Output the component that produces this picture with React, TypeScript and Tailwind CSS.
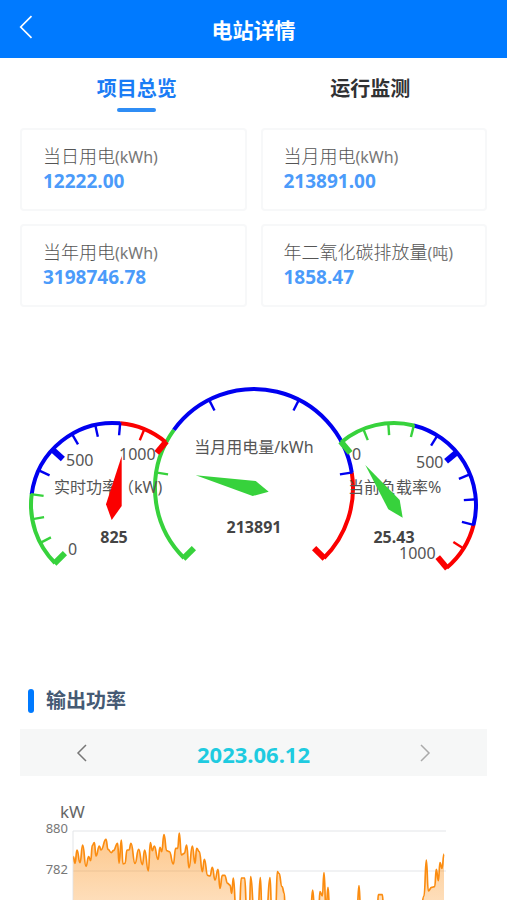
import { useState } from 'react';

type Band = { from: number; to: number; color: string };

interface GaugeProps {
  cx: number;
  cy: number;
  r: number;
  start: number;
  end: number;
  splits: number;
  major: number[];
}

const GREEN = '#37d23c';
const BLUE = '#0000f0';
const RED = '#fb0000';

const bands: Band[] = [
  { from: 0, to: 0.3, color: GREEN },
  { from: 0.3, to: 0.8, color: BLUE },
  { from: 0.8, to: 1, color: RED },
];

const stats = [
  { label: '当日用电', unit: '(kWh)', value: '12222.00' },
  { label: '当月用电', unit: '(kWh)', value: '213891.00' },
  { label: '当年用电', unit: '(kWh)', value: '3198746.78' },
  { label: '年二氧化碳排放量', unit: '(吨)', value: '1858.47' },
];

const tabs = ['项目总览', '运行监测'];

// output power samples, in thirds of a chart unit
const power: [number, number][] = [
  [130, 200], [135, 220], [141, 180], [150, 218], [158, 165], [168, 229], [176, 200], [182, 212],
  [187, 166], [193, 158], [198, 198], [208, 168], [213, 180], [228, 148], [234, 178], [244, 188],
  [250, 182], [263, 160], [267, 220], [274, 150], [279, 222], [285, 220], [291, 180], [297, 180],
  [303, 160], [315, 220], [326, 178], [337, 224], [344, 180], [355, 243], [361, 158], [367, 182],
  [373, 168], [384, 208], [390, 172], [395, 185], [402, 134], [410, 182], [418, 185], [430, 222],
  [437, 175], [443, 175], [448, 129], [454, 195], [463, 190], [470, 165], [477, 234], [487, 168],
  [495, 220], [500, 175], [508, 185], [517, 245], [523, 208], [533, 256], [540, 258], [547, 232],
  [555, 270], [564, 238], [570, 295], [577, 256], [584, 256], [593, 280], [600, 285], [605, 310],
  [610, 264], [618, 360], [628, 360], [634, 264], [644, 264], [650, 360], [658, 360], [662, 260],
  [672, 360], [684, 360], [691, 263], [696, 360], [710, 360], [720, 263], [725, 360], [737, 360],
  [742, 245], [747, 250], [756, 290], [763, 310], [765, 360], [842, 360], [848, 300], [854, 360],
  [866, 360], [870, 305], [877, 318], [882, 248], [888, 360], [894, 292], [899, 360], [981, 360],
  [987, 287], [992, 360], [1042, 360], [1045, 314], [1057, 314], [1061, 360], [1172, 360],
  [1182, 318], [1189, 210], [1195, 303], [1205, 292], [1214, 290], [1219, 238], [1225, 272],
  [1230, 218], [1236, 235], [1242, 192],
];

function smooth(points: [number, number][]) {
  return points.reduce((d, [x, y], i) => {
    if (i === 0) return `M${x} ${y}`;
    const [px, py] = points[i - 1];
    const mid = (px + x) / 2;
    return `${d} C${mid} ${py} ${mid} ${y} ${x} ${y}`;
  }, '');
}

function polar(cx: number, cy: number, r: number, deg: number) {
  const a = (deg * Math.PI) / 180;
  return [cx + r * Math.cos(a), cy - r * Math.sin(a)];
}

function Gauge({ cx, cy, r, start, end, splits, major }: GaugeProps) {
  const angle = (t: number) => start + (end - start) * t;
  const ticks = Array.from({ length: splits + 1 }, (_, i) => i);

  return (
    <g fill="none">
      {bands.map((b) => {
        const [x1, y1] = polar(cx, cy, r, angle(b.from));
        const [x2, y2] = polar(cx, cy, r, angle(b.to));
        return (
          <path key={b.from} d={`M${x1} ${y1}A${r} ${r} 0 0 1 ${x2} ${y2}`} stroke={b.color} strokeWidth={4} />
        );
      })}
      {ticks.map((i) => {
        const t = i / splits;
        const band = bands.find((b) => t <= b.to + 0.001) ?? bands[2];
        const big = major.includes(i);
        const [x1, y1] = polar(cx, cy, r + 1, angle(t));
        const [x2, y2] = polar(cx, cy, r - (big ? 14 : 12), angle(t));
        return (
          <line key={i} x1={x1} y1={y1} x2={x2} y2={y2} stroke={band.color} strokeWidth={big ? 6 : 2.4} />
        );
      })}
    </g>
  );
}

function Gauges() {
  return (
    <svg viewBox="0 0 507 220" className="block w-full" role="img" aria-label="实时功率、当月用电量、当前负载率">
      <Gauge cx={254} cy={127} r={99} start={225} end={-45} splits={5} major={[0, 5]} />
      <Gauge cx={113} cy={144} r={82} start={225} end={50} splits={10} major={[0, 5, 10]} />
      <Gauge cx={394} cy={144} r={82} start={130} end={-50} splits={10} major={[0, 5, 10]} />
      <g fontSize={16} fill="#555">
        <text x={68} y={194}>0</text>
        <text x={66} y={105}>500</text>
        <text x={119} y={99}>1000</text>
        <text x={54} y={132}>实时功率（kW)</text>
        <text x={254} y={92} textAnchor="middle">当月用电量/kWh</text>
        <text x={352} y={99}>0</text>
        <text x={416} y={107}>500</text>
        <text x={399} y={198}>1000</text>
        <text x={348} y={132}>当前负载率%</text>
      </g>
      <polygon points="121.7,95 106,143.3 111.7,159 121.7,145" fill={RED} />
      <polygon points="195.7,114.3 255.7,120 268.7,130.7 252.7,135" fill={GREEN} />
      <polygon points="365.3,104 399.7,139 402.7,156.7 388.3,148.3" fill={GREEN} />
      <g fontSize={16} fontWeight={700} fill="#444" textAnchor="middle">
        <text x={114} y={182}>825</text>
        <text x={254} y={172}>213891</text>
        <text x={394} y={182}>25.43</text>
      </g>
    </svg>
  );
}

function PowerChart() {
  const line = smooth(power);

  return (
    <svg viewBox="0 0 507 110" className="block w-full" role="img" aria-label="输出功率">
      <defs>
        <linearGradient id="area" x1="0" y1="120" x2="0" y2="420" gradientUnits="userSpaceOnUse">
          <stop offset="0" stopColor="#fb8c10" stopOpacity="0.5" />
          <stop offset="1" stopColor="#fb8c10" stopOpacity="0.2" />
        </linearGradient>
      </defs>
      <g stroke="#e3e5e8">
        <line x1={73} y1={41} x2={446} y2={41} />
        <line x1={73} y1={81} x2={446} y2={81} />
        <line x1={73} y1={41} x2={73} y2={110} />
      </g>
      <text x={60} y={28} fontSize={17} fill="#666">kW</text>
      <g fontSize={13} fill="#777" textAnchor="end">
        <text x={68} y={43}>880</text>
        <text x={68} y={84}>782</text>
      </g>
      <g transform="translate(30 0) scale(0.33333)">
        <path d={`${line} V360 H130 Z`} fill="url(#area)" />
        <path d={line} fill="none" stroke="#fb8c10" strokeWidth={5} strokeLinejoin="round" />
      </g>
    </svg>
  );
}

function Chevron({ className, d }: { className: string; d: string }) {
  return (
    <svg viewBox="0 0 12 20" className={className} fill="none" stroke="currentColor" aria-hidden="true">
      <path d={d} />
    </svg>
  );
}

export default function App() {
  const [tab, setTab] = useState(0);

  return (
    <div className="overflow-hidden bg-white font-['Noto_Sans','Noto_Sans_CJK_SC',sans-serif]">
      <header className="grid h-[58px] grid-cols-[1fr_auto_1fr] items-center bg-[#007aff] px-[18px] text-white">
        <button aria-label="返回" className="justify-self-start pb-1">
          <Chevron className="h-[24px] w-[15px] stroke-[1.4]" d="M11 1L2 10L11 19" />
        </button>
        <h1 className="pt-[2px] text-[21px] leading-[30px] font-bold">电站详情</h1>
      </header>

      <nav className="grid grid-cols-2 px-5 pt-[17px]">
        {tabs.map((name, i) => (
          <button
            key={name}
            onClick={() => setTab(i)}
            className={`flex flex-col items-center text-[20px] leading-[28px] font-bold ${
              tab === i ? 'text-[#1a7cf5]' : 'text-[#303133]'
            }`}
          >
            {name}
            <span className={`mt-[5px] h-1 w-[39px] rounded-full ${tab === i ? 'bg-[#2f8df5]' : ''}`} />
          </button>
        ))}
      </nav>

      <section className="grid grid-cols-2 gap-x-[14px] gap-y-[13px] px-5 pt-4">
        {stats.map((s) => (
          <div key={s.label} className="h-[83px] rounded-[4px] border-2 border-[#f7f8f9] px-[21px] pt-[14px] whitespace-nowrap">
            <p className="text-[18px] leading-[24px] font-light text-[#555]">
              {s.label}
              <span className="text-[16px] font-normal text-[#777]">{s.unit}</span>
            </p>
            <p className="text-[19px] leading-[24px] font-bold text-[#4b9bfa]">{s.value}</p>
          </div>
        ))}
      </section>

      <section className="pt-[54px]">
        <Gauges />
      </section>

      <section className="pt-[106px]">
        <div className="flex items-center gap-3 px-7">
          <span className="h-6 w-[6px] rounded-full bg-[#007aff]" />
          <h2 className="text-[20px] leading-[28px] font-bold text-[#455a74]">输出功率</h2>
        </div>
        <div className="mx-5 mt-[14px] flex h-[47px] items-center justify-between bg-[#f6f7f7] px-14">
          <button aria-label="前一天" className="text-[#777]">
            <Chevron className="h-[20px] w-[12px] stroke-[1.5]" d="M10 2L2 10L10 18" />
          </button>
          <time className="pt-[2px] text-[22px] leading-[30px] font-bold text-[#1fcbe0]">2023.06.12</time>
          <button aria-label="后一天" className="text-[#aaa]">
            <Chevron className="h-[20px] w-[12px] stroke-[1.5]" d="M2 2L10 10L2 18" />
          </button>
        </div>
        <div className="pt-[14px]">
          <PowerChart />
        </div>
      </section>
    </div>
  );
}
